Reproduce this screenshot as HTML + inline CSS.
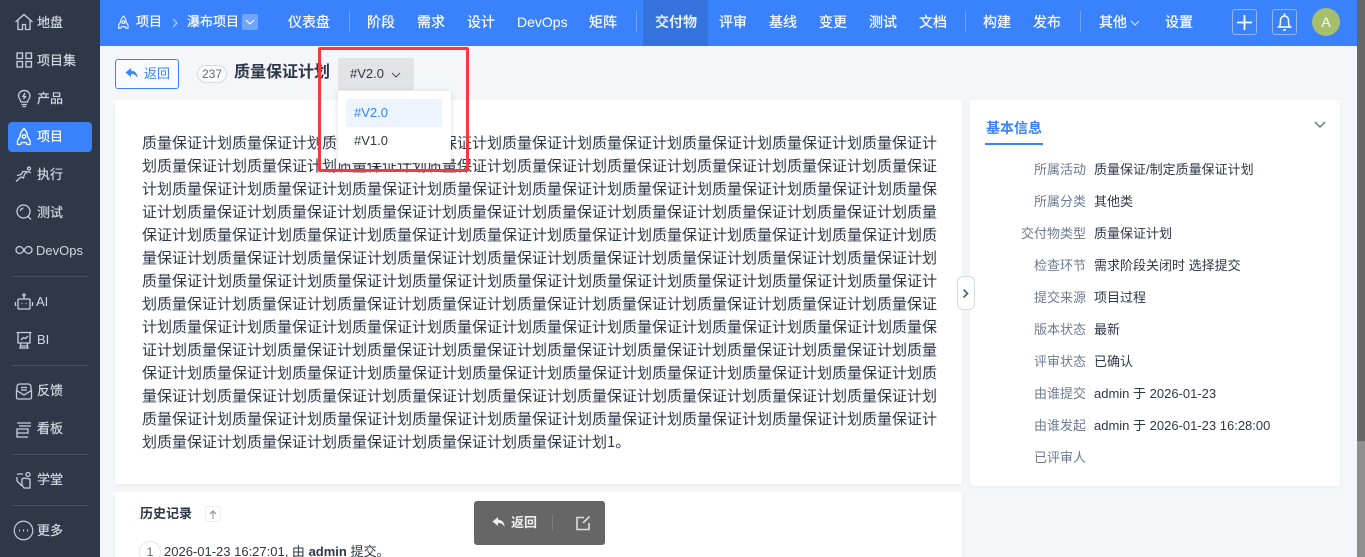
<!DOCTYPE html>
<html lang="zh-CN"><head><meta charset="utf-8"><title>质量保证计划</title>
<style>
*{box-sizing:border-box}
html,body{margin:0;padding:0;width:1365px;height:557px;overflow:hidden;background:#f5f6f9;font-family:"Liberation Sans","Noto Sans CJK SC",sans-serif;color:#2e3748}
#p{position:absolute;left:0;top:0;width:1365px;height:557px;overflow:hidden;background:#f5f6f9}
.a{position:absolute;white-space:nowrap}
#side{position:absolute;left:0;top:0;width:100px;height:557px;background:#2f3849}
#side .t{position:absolute;left:37px;font-size:13px;line-height:20px;color:#d4d9e1;white-space:nowrap;transform:translateY(1px);-webkit-text-stroke:.2px #d4d9e1}
#side .d{position:absolute;left:12px;width:76px;height:1px;background:#474f60}
#side svg{position:absolute;left:14px;width:20px;height:20px;fill:none;stroke:#c8d0dc;stroke-width:1.3}
#top{position:absolute;left:100px;top:0;width:1257px;height:46px;background:#3a82fb}
.n{position:absolute;top:12px;font-size:14px;line-height:20px;color:#fff;white-space:nowrap;transform:translateX(-100px);-webkit-text-stroke:.2px #fff}
.v{position:absolute;width:1px;top:11px;height:21px;background:#6ea3fb}
.l{position:absolute;width:100px;left:986px;text-align:right;font-size:13px;line-height:18px;color:#6d7b90;transform:translateY(1px)}
.w{position:absolute;left:1094px;font-size:13px;line-height:18px;color:#2e3748;white-space:nowrap;transform:translateY(1px)}
.card{position:absolute;background:#fff;border-radius:2px;box-shadow:0 1px 4px rgba(40,50,80,.05)}
</style></head><body>
<div id="p">
<div id="side">
<svg style="top:12px" viewBox="0 0 20 20"><path d="M1.500 10 10 2.500l8.500 7.500M4 8.500V17.500h4.500V12.500h3V17.500H16V8.500"/></svg>
<div class="t" style="top:12px">地盘</div>
<svg style="top:50px" viewBox="0 0 20 20"><rect x="3" y="3" width="5.500" height="5.500"/><rect x="12" y="3" width="5.500" height="5.500"/><rect x="3" y="11.500" width="5.500" height="5.500"/><rect x="12" y="11.500" width="5.500" height="5.500"/></svg>
<div class="t" style="top:50px">项目集</div>
<svg style="top:88px" viewBox="0 0 20 20"><path d="M7 14c0-2-2.500-3-2.500-6.500a5.800 5.800 0 0 1 11.500 0C16 11 13.500 12 13.500 14zM7.500 16.500h5.500M8.500 18.500h3.500M11 5 9 8.500h2.500L9.500 11"/></svg>
<div class="t" style="top:88px">产品</div>
<div class="a" style="left:8px;top:122px;width:84px;height:30px;background:#3a82fb;border-radius:4px"></div>
<svg style="top:127px;stroke:#fff" viewBox="0 0 20 20"><path d="M10 1.500c2.500 2.500 3.500 5 3.500 8l2.500 4v4h-3l-1-2H7.500l-1 2h-3v-4l2.500-4c0-3 1.500-5.500 4-8z"/><circle cx="10" cy="9.500" r="1.800"/></svg>
<div class="t" style="top:126px;color:#fff;-webkit-text-stroke:.2px #fff">项目</div>
<svg style="top:164px" viewBox="0 0 20 20"><path d="M2 17.500 7 13l2.500 1 1-4 4-2.500 2.500 1.500M3 11.500l4-1 2-3h4"/><circle cx="15" cy="4.500" r="1.500"/></svg>
<div class="t" style="top:164px">执行</div>
<svg style="top:202px" viewBox="0 0 20 20"><circle cx="9.500" cy="9.500" r="6.500"/><path d="M14 14.500l3 3M6.500 9a3.500 3.500 0 0 1 3-3"/></svg>
<div class="t" style="top:202px">测试</div>
<svg style="top:240px" viewBox="0 0 20 20"><path d="M10 10c-2-3-3-3.500-4.500-3.500a3.500 3.500 0 0 0 0 7C7 13.500 8 13 10 10c2-3 3-3.500 4.500-3.500a3.500 3.500 0 0 1 0 7C13 13.500 12 13 10 10z"/></svg>
<div class="t" style="top:240px;left:36px;-webkit-text-stroke:0">DevOps</div>
<div class="d" style="top:276px"></div>
<svg style="top:292px" viewBox="0 0 20 20"><rect x="4" y="7" width="12" height="10" rx="1"/><path d="M10 7V4M1.500 10v4M18.500 10v4M7.500 11.500h1M11.500 11.500h1"/><circle cx="10" cy="3" r="1"/></svg>
<div class="t" style="top:291px;left:36px;-webkit-text-stroke:0">AI</div>
<svg style="top:330px" viewBox="0 0 20 20"><path d="M2.500 2.500h15M4 2.500V13h12V2.500M7 13l-1 5h8l-1-5M6 16h8M7 10l2.500-2.500 2 1L14 6"/></svg>
<div class="t" style="top:329px;-webkit-text-stroke:0">BI</div>
<div class="d" style="top:365px"></div>
<svg style="top:381px" viewBox="0 0 20 20"><path d="M3 9V6q0-3 3-3h8q3 0 3 3v3M2.500 9.500V16q0 2 2 2h11q2 0 2-2V9.500L10 14zM7 6.500h6M7 9h6"/></svg>
<div class="t" style="top:380px">反馈</div>
<svg style="top:419px" viewBox="0 0 20 20"><path d="M3 4h14M3 10h11v4H3zM3 12v6h11M17 7H5"/></svg>
<div class="t" style="top:418px">看板</div>
<div class="d" style="top:454px"></div>
<svg style="top:470px" viewBox="0 0 20 20"><path d="M3 4h6M3 7v4l5 5M8 9l2-1 6 1v9h-6l-2-3z"/><circle cx="14" cy="4.500" r="2"/></svg>
<div class="t" style="top:469px">学堂</div>
<div class="d" style="top:505px"></div>
<svg style="top:520px;left:13px;width:21px;height:21px;stroke-width:1.100" viewBox="0 0 20 20"><circle cx="10" cy="10" r="8.800"/><path d="M5.700 10h1M9.500 10h1M13.300 10h1" stroke-width="1.800"/></svg>
<div class="t" style="top:520px">更多</div>
</div>

<div id="top">
<div class="a" style="left:543px;top:0;width:65px;height:46px;background:#3473dc"></div>
<svg class="a" style="left:16px;top:14px" width="15" height="17" viewBox="0 0 20 20" fill="none" stroke="#e4eeff" stroke-width="1.600"><path d="M10 1.500c2.500 2.500 3.500 5 3.500 8l2.500 4v4h-3l-1-2H7.500l-1 2h-3v-4l2.500-4c0-3 1.500-5.500 4-8z"/><circle cx="10" cy="9.500" r="1.800"/></svg>
<div class="n" style="left:136px;font-size:13px;top:12px">项目</div>
<svg class="a" style="left:71px;top:18px" width="8" height="10" viewBox="0 0 8 10" fill="none" stroke="#a5c6fd" stroke-width="1.300"><path d="M2 1l4 4-4 4"/></svg>
<div class="n" style="left:187px;font-size:13px;top:12px">瀑布项目</div>
<div class="a" style="left:142px;top:14px;width:16px;height:16px;background:#71a5fb;border-radius:2px"></div>
<svg class="a" style="left:145px;top:18px" width="10" height="8" viewBox="0 0 10 8" fill="none" stroke="#fff" stroke-width="1.100"><path d="M1 2l4 4 4-4"/></svg>
<div class="n" style="left:288px">仪表盘</div>
<div class="v" style="left:249px"></div>
<div class="n" style="left:367px">阶段</div>
<div class="n" style="left:417px">需求</div>
<div class="n" style="left:467px">设计</div>
<div class="n" style="left:517px;-webkit-text-stroke:0">DevOps</div>
<div class="n" style="left:589px">矩阵</div>
<div class="v" style="left:536px"></div>
<div class="n" style="left:655px;font-weight:700;color:#e6eefc;-webkit-text-stroke:0">交付物</div>
<div class="n" style="left:719px">评审</div>
<div class="n" style="left:769px">基线</div>
<div class="n" style="left:819px">变更</div>
<div class="n" style="left:869px">测试</div>
<div class="n" style="left:919px">文档</div>
<div class="v" style="left:865px"></div>
<div class="n" style="left:983px">构建</div>
<div class="n" style="left:1033px">发布</div>
<div class="v" style="left:980px"></div>
<div class="n" style="left:1099px">其他</div>
<svg class="a" style="left:1030px;top:19px" width="10" height="8" viewBox="0 0 10 8" fill="none" stroke="#dce9ff" stroke-width="1"><path d="M1 2l4 4 4-4"/></svg>
<div class="n" style="left:1165px">设置</div>
<div class="a" style="left:1132px;top:9px;width:25px;height:26px;border:1px solid #8db6fc;border-radius:3px"></div>
<svg class="a" style="left:1136px;top:14px" width="17" height="17" viewBox="0 0 17 17" stroke="#fff" stroke-width="1.800"><path d="M8.500 1v15M1 8.500h15"/></svg>
<div class="a" style="left:1172px;top:9px;width:25px;height:26px;border:1px solid #8db6fc;border-radius:3px"></div>
<svg class="a" style="left:1176px;top:12px" width="17" height="20" viewBox="0 0 17 20" fill="none" stroke="#fff" stroke-width="1.500"><path d="M3.500 15c1-2 1-5 1-7a4 4 0 0 1 8 0c0 2 0 5 1 7zM1.500 15h14M8.500 1.500V4M7 18h3"/></svg>
<div class="a" style="left:1212px;top:8px;width:28px;height:28px;border-radius:50%;background:#a5bf6f;color:#fff;font-size:14px;line-height:28px;text-align:center">A</div>
</div>

<div class="a" style="left:115px;top:59px;width:64px;height:30px;border:1px solid #3a82fb;border-radius:3px;background:#f8faff"></div>
<svg class="a" style="left:125px;top:67px" width="14" height="13" viewBox="0 0 14 13" fill="#3a82fb"><path d="M6 1 .5 5.500 6 10V7c3 0 5 1 6.500 4C12.500 6.500 10 3.800 6 3.800z"/></svg>
<div class="a" style="left:144px;top:64px;font-size:13px;line-height:20px;color:#3a82fb">返回</div>
<div class="a" style="left:197px;top:65px;width:30px;height:18px;border:1px solid #d8dbe3;border-radius:9px;font-size:12px;line-height:16px;text-align:center;color:#616d80;background:#fbfbfc">237</div>
<div class="a" style="left:234px;top:62px;font-size:16px;line-height:22px;font-weight:700;color:#2e3748">质量保证计划</div>
<div class="a" style="left:338px;top:58px;width:76px;height:32px;background:#e2e3e7;border-radius:2px"></div>
<div class="a" style="left:350px;top:64px;font-size:13px;line-height:20px;color:#2e3748">#V2.0</div>
<svg class="a" style="left:391px;top:71px" width="10" height="8" viewBox="0 0 10 8" fill="none" stroke="#4a5568" stroke-width="1.100"><path d="M1 2l4 4 4-4"/></svg>

<div class="card" style="left:115px;top:100px;width:847px;height:384px"></div>
<div class="a" style="left:142px;top:131px;width:796px;font-size:15px;line-height:23px;white-space:normal;word-break:break-all;color:#2e3748;font-family:'Noto Sans CJK SC','Liberation Sans',sans-serif">质量保证计划质量保证计划质量保证计划质量保证计划质量保证计划<!--
-->质量保证计划质量保证计划质量保证计划质量保证计划质量保证计划<!--
-->质量保证计划质量保证计划质量保证计划质量保证计划质量保证计划<!--
-->质量保证计划质量保证计划质量保证计划质量保证计划质量保证计划<!--
-->质量保证计划质量保证计划质量保证计划质量保证计划质量保证计划<!--
-->质量保证计划质量保证计划质量保证计划质量保证计划质量保证计划<!--
-->质量保证计划质量保证计划质量保证计划质量保证计划质量保证计划<!--
-->质量保证计划质量保证计划质量保证计划质量保证计划质量保证计划<!--
-->质量保证计划质量保证计划质量保证计划质量保证计划质量保证计划<!--
-->质量保证计划质量保证计划质量保证计划质量保证计划质量保证计划<!--
-->质量保证计划质量保证计划质量保证计划质量保证计划质量保证计划<!--
-->质量保证计划质量保证计划质量保证计划质量保证计划质量保证计划<!--
-->质量保证计划质量保证计划质量保证计划质量保证计划质量保证计划<!--
-->质量保证计划质量保证计划质量保证计划质量保证计划质量保证计划<!--
-->质量保证计划质量保证计划质量保证计划质量保证计划质量保证计划<!--
-->质量保证计划质量保证计划质量保证计划质量保证计划质量保证计划<!--
-->质量保证计划质量保证计划质量保证计划质量保证计划质量保证计划<!--
-->质量保证计划质量保证计划质量保证计划质量保证计划质量保证计划<!--
-->质量保证计划质量保证计划质量保证计划质量保证计划质量保证计划<!--
-->质量保证计划质量保证计划质量保证计划质量保证计划质量保证计划<!--
-->质量保证计划质量保证计划质量保证计划质量保证计划质量保证计划<!--
-->质量保证计划质量保证计划质量保证计划质量保证计划质量保证计划<!--
-->质量保证计划质量保证计划质量保证计划质量保证计划质量保证计划<!--
-->质量保证计划质量保证计划质量保证计划质量保证计划质量保证计划1。</div>

<div class="card" style="left:970px;top:100px;width:370px;height:386px"></div>
<div class="a" style="left:986px;top:118px;font-size:14px;line-height:20px;font-weight:700;color:#3a82fb">基本信息</div>
<div class="a" style="left:985px;top:143px;width:58px;height:2px;background:#3a82fb"></div>
<svg class="a" style="left:1314px;top:120px" width="12" height="9" viewBox="0 0 12 9" fill="none" stroke="#66758c" stroke-width="1.500"><path d="M1 2l5 5 5-5"/></svg>
<div class="l" style="top:160px">所属活动</div><div class="w" style="top:160px">质量保证/制定质量保证计划</div>
<div class="l" style="top:192px">所属分类</div><div class="w" style="top:192px">其他类</div>
<div class="l" style="top:224px">交付物类型</div><div class="w" style="top:224px">质量保证计划</div>
<div class="l" style="top:256px">检查环节</div><div class="w" style="top:256px">需求阶段关闭时 选择提交</div>
<div class="l" style="top:288px">提交来源</div><div class="w" style="top:288px">项目过程</div>
<div class="l" style="top:320px">版本状态</div><div class="w" style="top:320px">最新</div>
<div class="l" style="top:352px">评审状态</div><div class="w" style="top:352px">已确认</div>
<div class="l" style="top:384px">由谁提交</div><div class="w" style="top:384px">admin 于 2026-01-23</div>
<div class="l" style="top:416px">由谁发起</div><div class="w" style="top:416px">admin 于 2026-01-23 16:28:00</div>
<div class="l" style="top:448px">已评审人</div>
<div class="a" style="left:957px;top:276px;width:18px;height:34px;background:#fff;border:1px solid #d6daee;border-radius:6px"></div>
<svg class="a" style="left:962px;top:288px" width="8" height="11" viewBox="0 0 8 11" fill="none" stroke="#55647a" stroke-width="1.700"><path d="M1.500 1.500l4 4-4 4"/></svg>

<div class="card" style="left:115px;top:492px;width:847px;height:80px"></div>
<div class="a" style="left:140px;top:505px;font-size:13px;line-height:18px;font-weight:700;color:#2e3748">历史记录</div>
<div class="a" style="left:205px;top:506px;width:16px;height:16px;border:1px solid #eceef3;border-radius:2px"></div>
<svg class="a" style="left:209px;top:510px" width="8" height="9" viewBox="0 0 8 9" fill="none" stroke="#7b889b" stroke-width="1"><path d="M4 9V1M1 4l3-3 3 3"/></svg>
<div class="a" style="left:139px;top:541px;width:22px;height:22px;border:1px solid #e1e4ea;border-radius:50%;background:#fff;font-size:12px;line-height:20px;text-align:center;color:#55627a">1</div>
<div class="a" style="left:164px;top:543px;font-size:13px;line-height:18px;color:#2e3748">2026-01-23 16:27:01, 由 <b>admin</b> 提交。</div>

<div class="a" style="left:474px;top:501px;width:131px;height:44px;background:#666;border-radius:3px"></div>
<svg class="a" style="left:492px;top:516px" width="14" height="13" viewBox="0 0 14 13" fill="#eee"><path d="M6 1 .5 5.500 6 10V7c3 0 5 1 6.500 4C12.500 6.500 10 3.800 6 3.800z"/></svg>
<div class="a" style="left:511px;top:514px;font-size:13px;line-height:18px;font-weight:700;color:#eee">返回</div>
<div class="a" style="left:552px;top:515px;width:1px;height:16px;background:#7c7c7c"></div>
<svg class="a" style="left:575px;top:515px" width="16" height="16" viewBox="0 0 16 16" fill="none" stroke="#ddd" stroke-width="1.600"><path d="M9 2.500H2v12h12V8M14.500 1.500 8 8"/></svg>

<div class="a" style="left:338px;top:91px;width:113px;height:72px;background:#fff;box-shadow:0 1px 6px rgba(0,0,0,.14)"></div>
<div class="a" style="left:346px;top:99px;width:96px;height:28px;background:#edf4fe;border-radius:2px"></div>
<div class="a" style="left:354px;top:103px;font-size:13px;line-height:20px;color:#3a82fb">#V2.0</div>
<div class="a" style="left:354px;top:131px;font-size:13px;line-height:20px;color:#2e3748">#V1.0</div>
<div class="a" style="left:318px;top:47px;width:151px;height:125px;border:3px solid #f43a3f;border-radius:2px"></div>

<div class="a" style="left:1357px;top:0;width:8px;height:441px;background:#666"></div>
<div class="a" style="left:1357px;top:441px;width:8px;height:116px;background:#8f8f8f"></div>
</div>
</body></html>
